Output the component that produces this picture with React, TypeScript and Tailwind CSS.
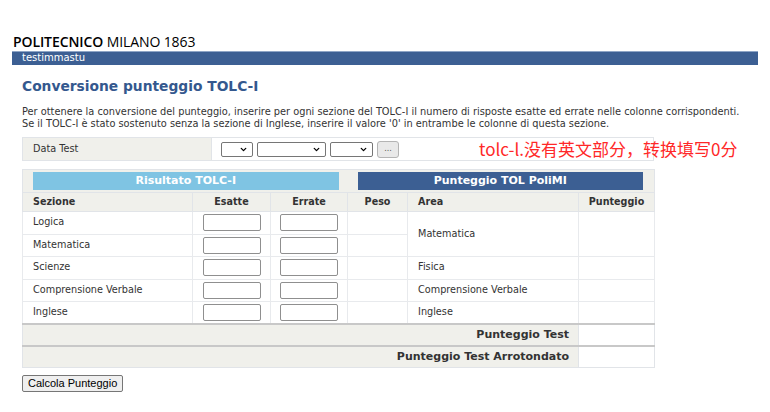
import { ChevronDown } from "lucide-react";

const rows = ["Logica", "Matematica", "Scienze", "Comprensione Verbale", "Inglese"];

function Select({ w }: { w: string }) {
  return (
    <div className={`h-[15px] ${w} bg-white border border-[#767676] rounded-[2px] flex items-center justify-end pr-[4px]`}>
      <ChevronDown className="w-[9px] h-[9px] text-black" strokeWidth={3.5} />
    </div>
  );
}

function Box() {
  return <input className="w-[58px] h-[17px] bg-white border border-[#8f8f8f] rounded-[2px] align-middle" />;
}

export default function App() {
  return (
    <div className="w-full h-[412px] bg-white font-['DejaVu_Sans',sans-serif] text-[#333]">
      <div className="pl-[13px] pt-[34px] text-[14px] leading-[16px] text-black font-['Open_Sans',sans-serif] tracking-[-0.1px]">
        <span className="font-semibold">POLITECNICO</span> <span className="font-medium">MILANO 1863</span>
      </div>
      <div className="mx-[12px] mt-[1px] h-[14px] bg-[#3c5f93] border-t border-[#8ea5c6] text-white text-[10px] leading-[12px] pl-[10px]">
        testimmastu
      </div>

      <div className="px-[22px]">
        <h1 className="mt-[13px] text-[13.8px] leading-[16px] font-bold text-[#34588e]">Conversione punteggio TOLC-I</h1>
        <p className="mt-[12px] text-[9.8px] leading-[11.5px] text-[#333]">
          Per ottenere la conversione del punteggio, inserire per ogni sezione del TOLC-I il numero di risposte esatte ed errate nelle colonne corrispondenti.
          <br />
          Se il TOLC-I è stato sostenuto senza la sezione di Inglese, inserire il valore '0' in entrambe le colonne di questa sezione.
        </p>

        <div className="relative mt-[8px] w-[632px]">
          <div className="flex h-[24px] border border-[#e1e4e8]">
            <div className="w-[189px] bg-[#f0f0eb] border-r border-[#e1e4e8] pl-[10px] flex items-center text-[9.7px]">Data Test</div>
            <div className="flex items-center gap-[4px] pl-[9px]">
              <Select w="w-[32px]" />
              <Select w="w-[69px]" />
              <Select w="w-[43px]" />
              <button className="h-[17px] w-[22px] bg-[#e9e9e9] border border-[#b4b4b4] rounded-[3px] text-[8px] leading-[12px] text-[#555]">...</button>
            </div>
          </div>
          <div className="absolute left-[457px] top-[1px] whitespace-nowrap text-[17px] leading-[22px] text-[#ff2828] font-['Noto_Sans_CJK_SC',sans-serif]">
            tolc-l.没有英文部分，转换填写0分
          </div>
        </div>

        <table className="mt-[8px] w-[632px] border-collapse table-fixed border border-[#e1e4e8]">
          <colgroup>
            <col className="w-[170px]" />
            <col className="w-[78px]" />
            <col className="w-[77px]" />
            <col className="w-[60px]" />
            <col className="w-[171px]" />
            <col className="w-[76px]" />
          </colgroup>
          <thead>
            <tr className="bg-[#f0f0eb] h-[23px]">
              <th colSpan={3} className="pl-[10px] pr-[9px] py-0">
                <div className="h-[18px] bg-[#7fc4e3] text-white text-[11px] leading-[18px] font-bold text-center">Risultato TOLC-I</div>
              </th>
              <th colSpan={3} className="pl-[10px] pr-[11px] py-0">
                <div className="h-[18px] bg-[#3c5f93] text-white text-[11px] leading-[18px] font-bold text-center">Punteggio TOL PoliMI</div>
              </th>
            </tr>
            <tr className="bg-[#f0f0eb] h-[19px] text-[9.6px] font-bold text-[#333]">
              <th className="border border-[#e1e4e8] text-left pl-[10px]">Sezione</th>
              <th className="border border-[#e1e4e8] text-center">Esatte</th>
              <th className="border border-[#e1e4e8] text-center">Errate</th>
              <th className="border border-[#e1e4e8] text-center">Peso</th>
              <th className="border border-[#e1e4e8] text-left pl-[10px]">Area</th>
              <th className="border border-[#e1e4e8] text-center">Punteggio</th>
            </tr>
          </thead>
          <tbody className="text-[9.7px]">
            {rows.map((r, i) => (
              <tr key={r} className="h-[22.5px]">
                <td className="border border-[#e8eaed] pl-[10px]">{r}</td>
                <td className="border border-[#e8eaed] text-center"><Box /></td>
                <td className="border border-[#e8eaed] text-center"><Box /></td>
                <td className="border border-[#e8eaed]"></td>
                {i === 0 && (
                  <>
                    <td rowSpan={2} className="border border-[#e8eaed] pl-[10px]">Matematica</td>
                    <td rowSpan={2} className="border border-[#e8eaed]"></td>
                  </>
                )}
                {i === 2 && <td className="border border-[#e8eaed] pl-[10px]">Fisica</td>}
                {i === 3 && <td className="border border-[#e8eaed] pl-[10px]">Comprensione Verbale</td>}
                {i === 4 && <td className="border border-[#e8eaed] pl-[10px]">Inglese</td>}
                {i > 1 && <td className="border border-[#e8eaed]"></td>}
              </tr>
            ))}
            <tr className="h-[22px] border-t-2 border-[#c8c8c8] text-[11px] font-bold">
              <td colSpan={5} className="bg-[#f0f0eb] text-right pr-[9px] border-r border-[#e1e4e8]">Punteggio Test</td>
              <td className="bg-white"></td>
            </tr>
            <tr className="h-[21px] border-t-2 border-[#c8c8c8] text-[11px] font-bold">
              <td colSpan={5} className="bg-[#f0f0eb] text-right pr-[9px] border-r border-[#e1e4e8]">Punteggio Test Arrotondato</td>
              <td className="bg-white"></td>
            </tr>
          </tbody>
        </table>

        <button className="mt-[7px] h-[17px] px-[5px] bg-[#efefef] border border-[#767676] rounded-[2px] text-[11px] leading-[14px] text-black font-['Liberation_Sans',sans-serif]">
          Calcola Punteggio
        </button>
      </div>
    </div>
  );
}
